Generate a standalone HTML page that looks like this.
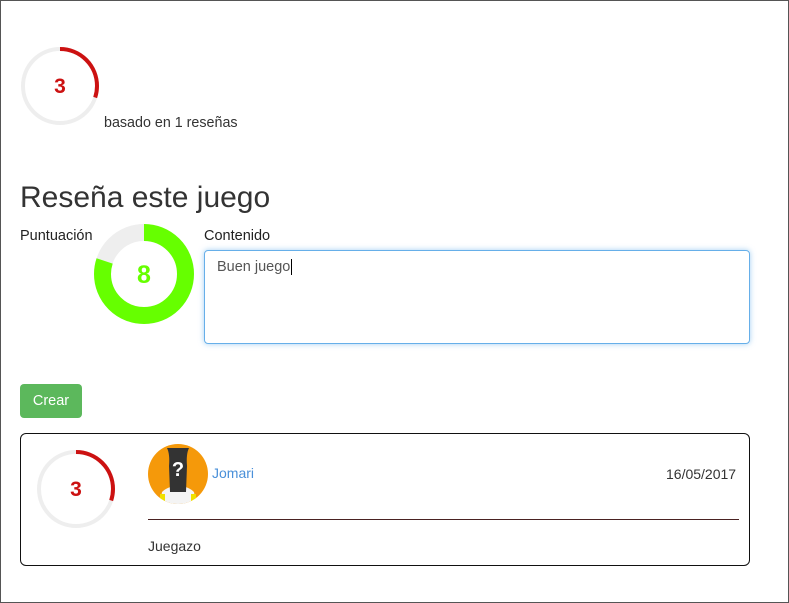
<!DOCTYPE html>
<html><head><meta charset="utf-8"><style>
html,body{margin:0;padding:0;}
body{width:789px;height:603px;position:relative;overflow:hidden;font-family:"Liberation Sans","DejaVu Sans",sans-serif;color:#333;background:#fff;}
.frame{position:absolute;left:0;top:0;width:787px;height:601px;border:1px solid #555;}
.abs{position:absolute;}
</style></head><body>
<div class="frame"></div>
<svg class="abs" style="left:0;top:0" width="789" height="603">
  <circle cx="60" cy="86" r="37" fill="none" stroke="#eeeeee" stroke-width="4"/>
  <circle cx="60" cy="86" r="37" fill="none" stroke="#cc1111" stroke-width="4" stroke-dasharray="69.7 300" transform="rotate(-90 60 86)"/>
  <text x="60" y="93" text-anchor="middle" font-family="Liberation Sans Narrow,Liberation Sans,sans-serif" font-size="21" font-weight="bold" fill="#cc1111">3</text>
  <circle cx="144" cy="274" r="41.5" fill="none" stroke="#eeeeee" stroke-width="17"/>
  <circle cx="144" cy="274" r="41.5" fill="none" stroke="#66ff00" stroke-width="17" stroke-dasharray="208.6 300" transform="rotate(-90 144 274)"/>
  <text x="144" y="283" text-anchor="middle" font-family="Liberation Sans,sans-serif" font-size="25" font-weight="bold" fill="#66ff00">8</text>
  <circle cx="76" cy="489" r="37" fill="none" stroke="#eeeeee" stroke-width="4"/>
  <circle cx="76" cy="489" r="37" fill="none" stroke="#cc1111" stroke-width="4" stroke-dasharray="69.7 300" transform="rotate(-90 76 489)"/>
  <text x="76" y="496" text-anchor="middle" font-family="Liberation Sans Narrow,Liberation Sans,sans-serif" font-size="21" font-weight="bold" fill="#cc1111">3</text>
</svg>
<div class="abs" style="left:104px;top:115px;font-size:14.3px;">basado en 1 reseñas</div>
<div class="abs" style="left:20px;top:181px;font-size:30px;">Reseña este juego</div>
<div class="abs" style="left:20px;top:228px;font-size:14.5px;color:#222;">Puntuación</div>
<div class="abs" style="left:204px;top:228px;font-size:14.5px;color:#222;">Contenido</div>
<div class="abs" style="left:204px;top:250px;width:544px;height:92px;border:1px solid #66afe9;border-radius:4px;box-shadow:0 0 6px rgba(102,175,233,.6);"></div>
<div class="abs" style="left:217px;top:259px;font-size:14.5px;color:#555;">Buen juego<span style="border-left:1px solid #000;margin-left:1px;"></span></div>
<div class="abs" style="left:20px;top:384px;width:62px;height:34px;background:#5cb85c;border-radius:4px;color:#fff;font-size:14.5px;line-height:35px;text-align:center;">Crear</div>
<div class="abs" style="left:20px;top:433px;width:728px;height:131px;border:1px solid #111;border-radius:6px;"></div>
<svg class="abs" style="left:148px;top:444px" width="60" height="60" viewBox="0 0 60 60">
  <defs><clipPath id="c"><circle cx="30" cy="30" r="30"/></clipPath></defs>
  <g clip-path="url(#c)">
    <rect width="60" height="60" fill="#f5990a"/>
    <path d="M12 60 L14 48 Q20 42 30 42 Q40 42 46 48 L48 60Z" fill="#f4f4f4"/>
    <rect x="12" y="50" width="5" height="8" fill="#f0e000"/>
    <rect x="43" y="50" width="5" height="8" fill="#f0e000"/>
    <path d="M19 4 L41 4 Q38 10 39 22 L38 48 L22 48 L21 22 Q22 10 19 4Z" fill="#333"/>
    <text x="30" y="32" text-anchor="middle" font-family="Liberation Sans,sans-serif" font-size="20" font-weight="bold" fill="#fff">?</text>
  </g>
</svg>
<div class="abs" style="left:212px;top:465px;font-size:14px;color:#4a90d9;">Jomari</div>
<div class="abs" style="left:666px;top:466px;font-size:14px;">16/05/2017</div>
<div class="abs" style="left:148px;top:519px;width:591px;height:1px;background:#4a2222;"></div>
<div class="abs" style="left:148px;top:538px;font-size:14px;">Juegazo</div>
</body></html>
